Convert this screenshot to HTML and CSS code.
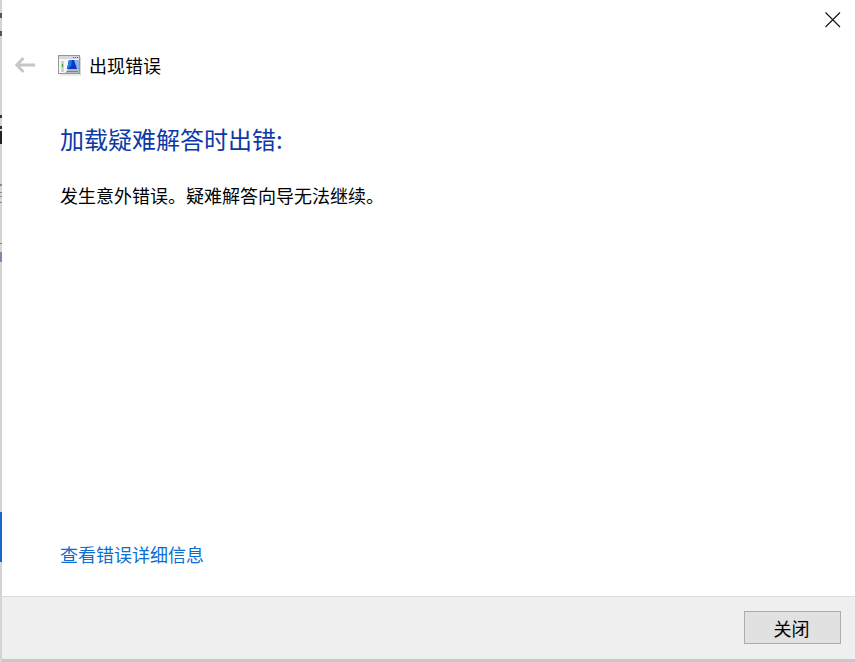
FILE: index.html
```html
<!DOCTYPE html>
<html lang="zh-CN">
<head>
    <meta charset="utf-8">
    <link rel="stylesheet" href="styles.css">
</head>
<body>
    <div class="desktop-edge">
        <span class="edge-mark edge-mark-1"></span>
        <span class="edge-mark edge-mark-2"></span>
        <span class="edge-mark edge-mark-3"></span>
        <span class="edge-mark edge-mark-4"></span>
        <span class="edge-mark edge-mark-5"></span>
        <span class="edge-mark edge-mark-6"></span>
        <span class="edge-mark edge-mark-7"></span>
        <span class="edge-mark edge-mark-8"></span>
        <span class="edge-mark edge-mark-9"></span>
        <span class="edge-mark edge-mark-10"></span>
        <span class="edge-mark edge-mark-11"></span>
        <span class="edge-active"></span>
    </div>
    <div class="dialog">
        <div class="title-row">
            <button class="close-x" aria-label="关闭">
                <svg width="16" height="16" viewBox="0 0 16 16"><path d="M.5.5l14.500 14.500M15 .5L.5 15" stroke="#111" stroke-width="1.100" fill="none"/></svg>
            </button>
        </div>
        <div class="nav-row">
            <svg class="back-arrow" width="21" height="16" viewBox="0 0 21 16"><path d="M8.500 1L1.800 8l6.700 7M2.500 8H20" stroke="#c6c6c6" stroke-width="2.800" fill="none"/></svg>
            <svg class="app-icon" width="23" height="21" viewBox="0 0 23 21">
                <rect x="0.500" y="0.500" width="21" height="18" fill="#f6f6f6" stroke="#969696"/>
                <rect x="1" y="1" width="20" height="3" fill="#d5d8dd"/>
                <path d="M15 2h1v1h-1zM17 2h1v1h-1zM19 2h1v1h-1z" fill="#555"/>
                <rect x="3" y="6" width="3" height="11" fill="#cfd2cf"/>
                <rect x="4" y="9" width="1" height="3" fill="#35a535"/>
                <path d="M11 5h10v9H9z" fill="#8cb2e6"/>
                <path d="M11 5h5l3 9H9z" fill="#0b36c4"/>
                <path d="M11 5h3l-1 6-3.500 3H9z" fill="#1f7cf0"/>
                <path d="M7 18l3-4h11v4z" fill="#b4bac2"/>
                <path d="M9 16.500h11" stroke="#7a8290" stroke-width="1"/>
                <path d="M22 2h1v18.500H2v-1h20z" fill="#d6d6d6"/>
            </svg>
            <span class="nav-title">出现错误</span>
        </div>
        <div class="content">
            <h1 class="heading">加载疑难解答时出错:</h1>
            <p class="message">发生意外错误。疑难解答向导无法继续。</p>
            <a class="details-link" href="#">查看错误详细信息</a>
        </div>
        <div class="footer">
            <button class="close-btn">关闭</button>
        </div>
    </div>
</body>
</html>
```

FILE: styles.css
```css
html, body {
    height: 100%;
}

body {
    margin: 0;
    background: #c8c8c8;
    font-family: "Noto Sans CJK SC", "Liberation Sans", sans-serif;
    color: #000000;
    display: flex;
    overflow: hidden;
}

.desktop-edge {
    position: relative;
    width: 2px;
    flex-shrink: 0;
    background: #d4d4d4;
}

.edge-mark {
    position: absolute;
    left: 0;
    width: 2px;
    background: #555555;
}

.edge-mark-1 { top: 13px; height: 5px; }
.edge-mark-2 { top: 31px; height: 5px; }
.edge-mark-3 { top: 115px; height: 3px; background: #333333; }
.edge-mark-4 { top: 126px; height: 3px; background: #333333; }
.edge-mark-5 { top: 131px; height: 13px; background: #222222; }
.edge-mark-6 { top: 184px; height: 2px; background: #888888; }
.edge-mark-7 { top: 192px; height: 1px; background: #888888; }
.edge-mark-8 { top: 196px; height: 1px; background: #888888; }
.edge-mark-9 { top: 202px; height: 1px; background: #888888; }
.edge-mark-10 { top: 243px; height: 1px; background: #888888; }
.edge-mark-11 { top: 252px; height: 10px; background: #7c8ba6; }

.edge-active {
    position: absolute;
    left: 0;
    top: 512px;
    width: 2px;
    height: 50px;
    background: #1a66c9;
}

.dialog {
    flex: 1;
    height: 659px;
    background: #ffffff;
    display: flex;
    flex-direction: column;
}

.title-row {
    display: flex;
    justify-content: flex-end;
    padding: 12px 14px 0 0;
    height: 31px;
    box-sizing: border-box;
}

.close-x {
    width: 16px;
    height: 16px;
    padding: 0;
    border: none;
    background: none;
    display: flex;
}

.nav-row {
    display: flex;
    align-items: center;
    height: 44px;
    margin-top: 12px;
    padding-left: 13px;
    box-sizing: border-box;
}

.back-arrow {
    margin-right: 22px;
}

.app-icon {
    margin-right: 8px;
}

.nav-title {
    font-size: 18px;
    line-height: 24px;
}

.content {
    flex: 1;
    display: flex;
    flex-direction: column;
    padding: 0 0 0 58px;
}

.heading {
    margin: 34px 0 0;
    font-size: 24px;
    line-height: 36px;
    font-weight: 400;
    color: #0b3aa8;
}

.message {
    margin: 26px 0 0;
    font-size: 18px;
    line-height: 24px;
}

.details-link {
    margin-top: auto;
    margin-bottom: 30px;
    font-size: 18px;
    line-height: 24px;
    color: #0a6fd1;
    text-decoration: none;
}

.footer {
    height: 63px;
    box-sizing: border-box;
    background: #efefef;
    border-top: 1px solid #dcdcdc;
    display: flex;
    justify-content: flex-end;
    align-items: flex-start;
    padding: 14px 14px 0 0;
}

.close-btn {
    width: 97px;
    height: 33px;
    box-sizing: border-box;
    background: #e1e1e1;
    border: 1px solid #adadad;
    font-family: inherit;
    font-size: 18px;
    color: #000000;
    padding: 0 2px 0 0;
}
```
